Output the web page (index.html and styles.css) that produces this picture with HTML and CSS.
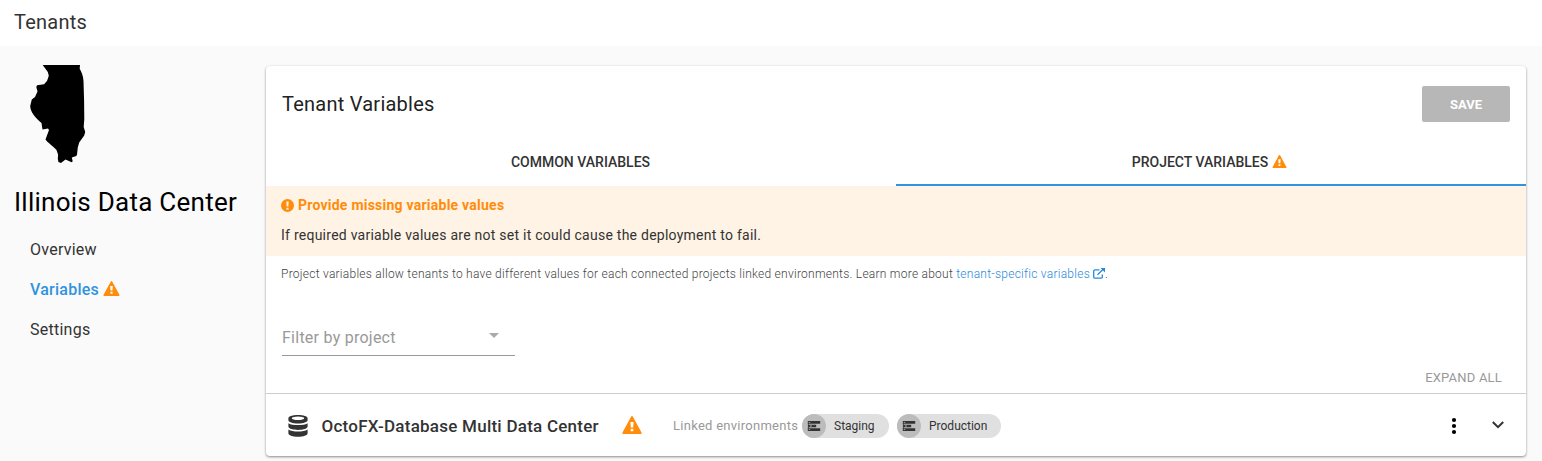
FILE: index.html
```html
<!DOCTYPE html>
<html lang="en">
<head>
<meta charset="utf-8">
<title>Tenants</title>
<link rel="stylesheet" href="styles.css">
</head>
<body>
<svg class="defs" width="0" height="0" aria-hidden="true">
  <symbol id="warning" viewBox="0 0 20 18"><path fill-rule="evenodd" d="M9.200.5Q10 -.5 10.800.5L19.500 16.600Q19.900 18 18.800 18H1.200Q.1 18 .5 16.600zM8.400 6l.4 5.400h2.400l.4-5.400zM8.700 12.800v2.400h2.600v-2.400z"/></symbol>
  <symbol id="server" viewBox="0 0 14 12"><path fill-rule="evenodd" d="M.8 1h12.400v2.700H.8zM1.800 1.900v.8h1.400v-.8zM1.200 4.700h8v2.600h-8zM3 5.600v.8h1.800v-.8zM.8 8.300h12.400V11H.8zM1.800 9.300v.8h1.400v-.8z"/><path d="M.9 3h.8v6H.9z"/></symbol>
</svg>
<header class="topbar">Tenants</header>
<div class="layout">
  <aside class="sidebar">
    <svg class="logo" viewBox="0 0 56 99"><path d="M12.700 0H50l-.3 3.700c2 3.500 3.500 7 3.800 12.300l.6 20 .2 18-.6 8 1.500 5-1 3.500-5 7-1.400 5-.8 7-.7 1.500-4.500 1.500.9 3.700-1 1-6.200-2.700-4.500 3.500-2.600-1-.6-3.300.3-4-1.600-4.600C22 80 18 78 15.500 74.500L19 65l-1-1.500-5.500 1-1-6.500C6 53 2 49 .5 43.500L.2 41l1.600-6.500L5 32l2.500-5.500-1.200-4.500.8-1.800 7-1 3-3.500 1.700-5-1-3.700z"/></svg>
    <h1 class="tenant-name">Illinois Data Center</h1>
    <nav class="nav">
      <a class="nav-item">Overview</a>
      <a class="nav-item active">Variables<svg class="warn nav-warn"><use href="#warning"/></svg></a>
      <a class="nav-item">Settings</a>
    </nav>
  </aside>
  <main class="card">
    <div class="card-head">
      <h2 class="card-title">Tenant Variables</h2>
      <button class="save">SAVE</button>
    </div>
    <div class="tabs">
      <div class="tab common">COMMON VARIABLES</div>
      <div class="tab selected">PROJECT VARIABLES<svg class="warn tab-warn"><use href="#warning"/></svg></div>
    </div>
    <section class="callout">
      <div class="callout-title"><svg class="alert-icon" viewBox="0 0 12 12"><path fill-rule="evenodd" d="M6 0a6 6 0 1 1 0 12A6 6 0 0 1 6 0zM4.900 2.200l.3 4.800h1.600l.3-4.800zM5 8v1.900h2V8z"/></svg>Provide missing variable values</div>
      <div class="callout-text">If required variable values are not set it could cause the deployment to fail.</div>
    </section>
    <p class="help"><span class="help-text">Project variables allow tenants to have different values for each connected projects linked environments. Learn more about </span><a class="link">tenant-specific variables</a><svg class="external" viewBox="0 0 12 11"><path d="M6.500 1.800H2A1.300 1.300 0 0 0 .7 3.100v5.800A1.300 1.300 0 0 0 2 10.200h6a1.300 1.300 0 0 0 1.300-1.300V6.500M4.500 6.800L10.500 1" fill="none" stroke="currentColor" stroke-width="1.300"/><path d="M7.500 0H12v4.500z" fill="currentColor"/></svg>.</p>
    <div class="filter"><span>Filter by project</span><i class="caret"></i></div>
    <div class="expand">EXPAND ALL</div>
    <div class="project">
      <svg class="db" viewBox="0 0 20 22"><path fill-rule="evenodd" d="M10 0c5.500 0 9.600 1.300 9.600 3.300v2C19.600 7.100 15.500 8.500 10 8.500S.4 7.100.4 5.300v-2C.4 1.300 4.500 0 10 0zm0 1.400c-3.600 0-6.200.8-6.200 1.800S6.400 5 10 5s6.200-.8 6.200-1.800S13.600 1.400 10 1.400z"/><path d="M.4 8.200C2.500 9.600 6 10.100 10 10.100s7.500-.5 9.600-1.900v3.300c0 2-4.100 3.400-9.600 3.400S.4 13.500.4 11.500zM.4 14.600c2.100 1.400 5.600 2 9.600 2s7.500-.6 9.600-2v3.700c0 2.100-4.100 3.500-9.600 3.500S.4 20.400.4 18.300z"/></svg>
      <span class="project-name">OctoFX-Database Multi Data Center</span>
      <svg class="warn project-warn"><use href="#warning"/></svg>
      <span class="linked">Linked environments</span>
      <span class="chip staging"><i class="avatar"><svg class="server"><use href="#server"/></svg></i>Staging</span>
      <span class="chip production"><i class="avatar"><svg class="server"><use href="#server"/></svg></i>Production</span>
      <span class="actions">
        <svg class="dots" viewBox="0 0 6 18"><circle cx="3" cy="3" r="2.100"/><circle cx="3" cy="9" r="2.100"/><circle cx="3" cy="15" r="2.100"/></svg>
        <svg class="chevron" viewBox="0 0 12 8"><path d="M.8 1L6 6.200 11.200 1" fill="none" stroke="#333" stroke-width="2"/></svg>
      </span>
    </div>
  </main>
</div>
</body>
</html>
```
FILE: styles.css
```css
* { box-sizing: border-box; }
body { margin: 0; height: 461px; overflow: hidden; background: #fafafa; color: #333; font-family: Roboto, "Liberation Sans", sans-serif; white-space: nowrap; }
h1, h2, p { margin: 0; font-weight: 400; }
svg { flex: none; }
.defs { display: block; height: 0; }
.topbar { height: 46px; padding-left: 14px; background: #fff; font-size: 20px; line-height: 44px; letter-spacing: .25px; }
.layout { display: flex; padding-top: 20px; }
.sidebar { width: 266px; flex: none; }
.logo { display: block; width: 56px; height: 99px; margin: -1px 0 0 30px; fill: #000; }
.tenant-name { margin: 22px 0 0 14px; color: #000; font-size: 26px; line-height: 32px; letter-spacing: .26px; }
.nav { margin: 11px 0 0 30px; }
.nav-item { display: flex; align-items: center; height: 40px; font-size: 16px; letter-spacing: .25px; }
.nav-item.active { color: #2f93e0; font-weight: 500; }
.warn { fill: #ff8c0a; }
.nav-warn { width: 17px; height: 15px; margin: -1px 0 0 4px; }
.card { width: 1260px; height: 390px; background: #fff; border-radius: 4px; box-shadow: 0 1px 3px rgba(0,0,0,.26), 0 1px 2px rgba(0,0,0,.22); }
.card-head { display: flex; align-items: center; justify-content: space-between; height: 76px; padding: 0 16px; }
.card-title { font-size: 20px; color: #222; letter-spacing: .24px; }
.save { width: 88px; height: 36px; border: 0; padding: 0; border-radius: 2px; background: #b7b7b7; color: #fff; font: 700 13px Roboto, sans-serif; }
.tabs { display: grid; grid-template-columns: 1fr 1fr; height: 44px; }
.tab { display: flex; align-items: center; justify-content: center; height: 44px; font-size: 14px; font-weight: 500; }
.tab.selected { border-bottom: 2px solid #2f93e0; padding: 0 3px 2px 0; }
.common { padding: 0 1px 4px 0; }
.tab-warn { width: 15px; height: 13px; margin: -1px 0 0 4px; }
.callout { height: 70px; padding: 9px 15px 0; background: #fff3e5; font-size: 14px; }
.callout-title { display: flex; align-items: center; height: 20px; color: #ff8c0a; font-weight: 700; letter-spacing: .24px; }
.alert-icon { width: 13px; height: 13px; margin-right: 4px; fill: #ff8c0a; }
.callout-text { height: 20px; margin-top: 10px; line-height: 20px; letter-spacing: .25px; }
.help { display: flex; align-items: center; height: 20px; margin: 8px 0 0 15px; color: #444; font-size: 12px; font-weight: 300; letter-spacing: .25px; white-space: pre; }
.link, .external { color: #2a88dc; }
.external { width: 12px; height: 11px; margin: -1px 0 0 3px; }
.filter { display: flex; align-items: center; justify-content: space-between; width: 233px; height: 37px; margin: 35px 0 0 16px; padding: 0 16px 0 0; border-bottom: 1px solid #999; font-size: 16px; letter-spacing: .25px; color: #999; }
.caret { border: 5px solid transparent; border-top-color: #aaa; border-bottom: 0; margin-bottom: 3px; }
.expand { height: 38px; padding: 12px 24px 0 0; border-bottom: 1px solid #ccc; text-align: right; color: #999; font-size: 13px; line-height: 20px; letter-spacing: .2px; }
.project { display: flex; align-items: center; height: 63px; padding-left: 22px; }
.db { width: 20px; height: 22px; fill: #333; margin-top: 1px; }
.project-name { width: 300px; margin-left: 13.5px; margin-right: .5px; font-size: 17px; font-weight: 500; letter-spacing: .24px; }
.project-warn { width: 20px; height: 18px; margin-top: -1px; }
.linked { width: 129px; margin-left: 31px; color: #999; font-size: 13px; letter-spacing: .27px; }
.chip { display: flex; align-items: center; height: 24px; border-radius: 12px; background: #e0e0e0; font-size: 12px; margin-top: 1px; }
.staging { width: 87px; margin-right: 8px; }
.production { width: 104px; }
.avatar { display: flex; align-items: center; justify-content: center; width: 24px; height: 24px; margin-right: 8px; border-radius: 50%; background: #bcbcbc; }
.server { width: 14px; height: 12px; fill: #333; }
.actions { display: flex; align-items: center; gap: 35px; margin-left: auto; padding-right: 22px; }
.dots { width: 6px; height: 18px; margin-top: 1px; }
.chevron { width: 12px; height: 8px; margin-top: -2px; }
```
